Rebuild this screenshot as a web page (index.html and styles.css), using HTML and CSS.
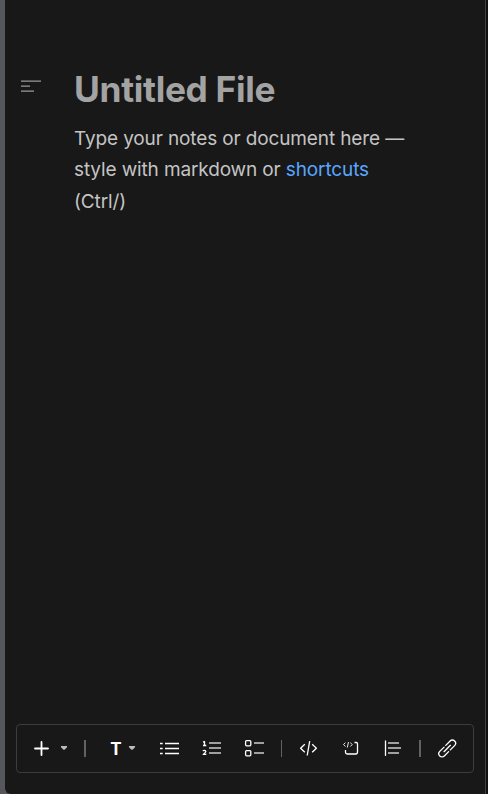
FILE: index.html
```html
<!DOCTYPE html>
<html lang="en">
<head>
<meta charset="utf-8">
<title>Untitled File</title>
<link rel="stylesheet" href="styles.css">
</head>
<body>
<main class="panel">
  <section class="document">
    <svg class="outline" width="20" height="14" viewBox="0 0 20 14"><path d="M0 1.1h20M0 6.1h9M0 11.1h13"/></svg>
    <article>
      <h1>Untitled File</h1>
      <p>Type your notes or document here —<br>style with markdown or <a>shortcuts</a><br>(Ctrl/)</p>
    </article>
  </section>
  <nav class="toolbar">
    <svg class="add" width="19" height="21" viewBox="0 0 19 21"><path class="bold" d="M3 10.5h13M9.5 4v13"/></svg>
    <svg class="caret" width="12" height="21" viewBox="0 0 12 21"><path d="M3.2 8h5.6q.8.8 0 1.4L6.8 11.4q-.8.7-1.6 0L3.2 9.4q-.8-.6 0-1.4z"/></svg>
    <span class="divider wide"></span>
    <span class="text-style">T</span>
    <svg class="caret second" width="12" height="21" viewBox="0 0 12 21"><path d="M3.2 8h5.6q.8.8 0 1.4L6.8 11.4q-.8.7-1.6 0L3.2 9.4q-.8-.6 0-1.4z"/></svg>
    <svg class="tool" width="22" height="21" viewBox="0 0 22 21"><path d="M1 5.5h2.7M6 5.5h14M1 10.5h2.7M6 10.5h14M1 15.5h2.7M6 15.5h14"/></svg>
    <svg class="tool numbered" width="22" height="21" viewBox="0 0 22 21"><path class="soft" d="M8 5h12M8 10h12M8 15h12"/><path d="M2 4.2l1.5-.7v4M2 7.5h3.3M2 13.2q.2-.9 1.4-.9 1.4 0 1.4 1.1 0 .8-2.6 3H5.3"/></svg>
    <svg class="tool" width="22" height="21" viewBox="0 0 22 21"><rect x="2.6" y="2.6" width="5.2" height="5.2" rx="1"/><rect x="2.6" y="12.6" width="5.2" height="5.2" rx="1"/><path class="soft" d="M11 5h10M11 15h10"/></svg>
    <span class="divider"></span>
    <svg class="tool code" width="22" height="21" viewBox="0 0 22 21"><path d="M6.8 6.3L2.6 10.2l4.2 4M14.2 6.3l4.2 3.9-4.2 4M11.7 3.2L9.2 17.5"/></svg>
    <svg class="tool" width="22" height="21" viewBox="0 0 22 21"><path class="fine" d="M5.4 4.7L3.5 6.5l1.9 2M10.3 4.7l2 1.8-2 2M8.5 4L7.3 9.5"/><path d="M14.5 4.5h1.7q1.3 0 1.3 1.3v8.3q0 1.9-1.9 1.9H7.3q-1.8 0-1.8-1.8V12"/></svg>
    <svg class="tool" width="22" height="21" viewBox="0 0 22 21"><path d="M3.5 2.5v15.4"/><path class="soft" d="M6 5h11M6 10h13M6 15h11"/></svg>
    <span class="divider wide last"></span>
    <svg class="tool link" width="22" height="21" viewBox="0 0 22 21"><g transform="rotate(-45 11.2 10.5)"><path d="M10 13.7H3.9a3.2 3.2 0 0 1 0-6.4H10M12.4 7.3h6.1a3.2 3.2 0 0 1 0 6.4h-6.1M6.7 10.5h9"/></g></svg>
  </nav>
</main>
</body>
</html>
```
FILE: styles.css
```css
* { box-sizing: border-box; }
body {
  margin: 0;
  height: 794px;
  overflow: hidden;
  padding: 0 2px 0 5px;
  background: linear-gradient(90deg, #56575c 0 30px, #101010 30px);
  font-family: Inter, "Liberation Sans", sans-serif;
}
.panel {
  height: 794px;
  display: flex;
  flex-direction: column;
  justify-content: space-between;
  padding: 66px 11px 21px;
  background: #181818;
  border-right: 1px solid #404040;
  border-bottom-left-radius: 6px;
}
.document { display: flex; padding-left: 5px; }
svg { flex: none; fill: none; stroke: #fff; stroke-width: 1.3; stroke-linecap: round; stroke-linejoin: round; }
.outline { margin: 14px 33px 0 0; stroke: #999; stroke-linecap: butt; }
h1 {
  margin: 0;
  color: #a3a3a3;
  font-size: 35.3px;
  font-weight: 700;
  line-height: 47px;
  letter-spacing: -0.33px;
  white-space: nowrap;
}
p {
  margin: 9.6px 0 0;
  color: #c4c4c4;
  font-size: 19px;
  line-height: 31.5px;
  letter-spacing: -0.13px;
  white-space: nowrap;
}
a { color: #58a6ff; }
.toolbar {
  height: 49px;
  width: 458px;
  display: flex;
  align-items: center;
  padding-left: 15px;
  border: 1px solid #3c3c3c;
  border-radius: 4px;
}
.caret { margin-left: 7px; fill: #bbb; stroke: none; }
.caret.second { margin: 0 1px 0 2px; }
.divider { width: 1px; height: 17px; margin: 0 -4px 0 16px; background: #626262; }
.wide { width: 2px; margin: 0 22px 0 14px; }
.last { margin: 0 -5px 0 15px; }
.text-style { width: 16px; padding-top: 1px; color: #fff; font-size: 17px; font-weight: 700; line-height: 21px; text-align: center; }
.tool { margin-left: 20px; stroke-linecap: butt; }
.code { stroke-width: 1.3; }
.link { stroke-linecap: round; stroke-width: 1.3; }
.bold { stroke-width: 1.8; }
.soft { stroke: #ccc; stroke-width: 1.5; }
.fine { stroke-width: .9; }
```
